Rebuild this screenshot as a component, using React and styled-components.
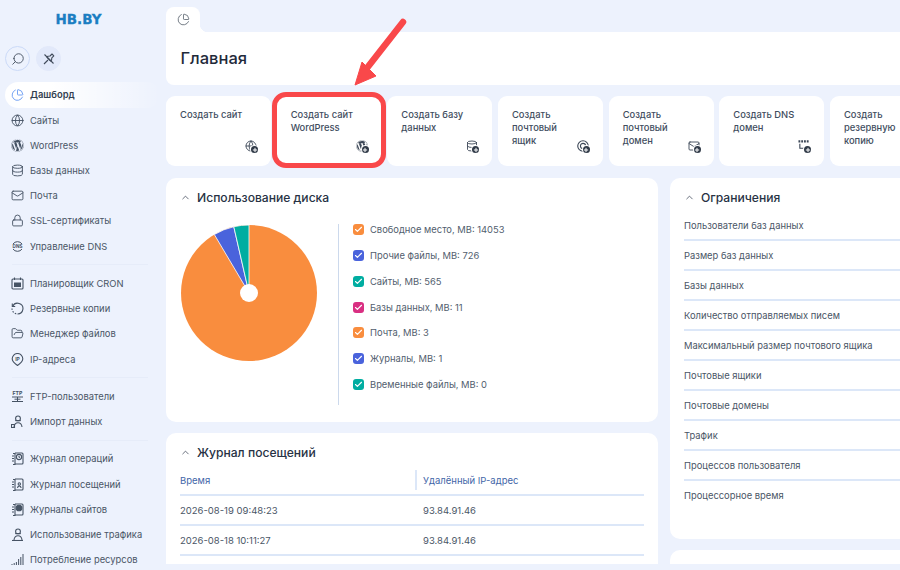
import React from 'react';
import styled, { createGlobalStyle } from 'styled-components';
import {
  ChartPie, Globe, Database, Mail, Lock, FolderOpen, Search, ChevronUp, Check, Plus,
} from 'lucide-react';
import { FaWordpress } from 'react-icons/fa';

const Global = createGlobalStyle`
  html, body { margin: 0; padding: 0; background: #edf2fd; }
  body { font-family: Inter, "Noto Sans", sans-serif; color: #4a5666; }
  #root { width: 900px; height: 570px; overflow: hidden; }
`;

const Page = styled.div`
  position: relative;
  display: flex;
  width: 900px;
  height: 570px;
  overflow: hidden;
  background: #edf2fd;
`;

const Sidebar = styled.aside`
  flex: 0 0 165px;
  box-sizing: border-box;
  padding: 0 5px;
`;

const Logo = styled.div`
  height: 38px;
  display: flex;
  align-items: center;
  justify-content: center;
  padding-right: 8px;
  font-family: "DejaVu Sans", sans-serif;
  font-weight: 700;
  font-size: 13.5px;
  -webkit-text-stroke: 0.3px #1b7ec2;
  color: #1b7ec2;
`;

const Tools = styled.div`
  display: flex;
  gap: 6px;
  margin-top: 8px;
`;

const RoundButton = styled.button`
  width: 25px;
  height: 25px;
  padding: 0;
  display: flex;
  align-items: center;
  justify-content: center;
  border-radius: 50%;
  box-sizing: border-box;
  color: #3f4a5a;
  border: 1px solid ${(p) => (p.$filled ? '#e2e9fa' : '#cbdaf8')};
  background: ${(p) => (p.$filled ? '#e2e9fa' : 'transparent')};
`;

const Nav = styled.nav`
  margin-top: 11.4px;
`;

const NavRow = styled.div`
  height: 25.2px;
  display: flex;
  align-items: center;
  gap: 6px;
  padding-left: 6px;
  border-radius: 13px;
  font-size: 9.4px;
  color: ${(p) => (p.$active ? '#333f50' : '#4a5666')};
  font-weight: ${(p) => (p.$active ? 600 : 400)};
  background: ${(p) => (p.$active ? 'linear-gradient(90deg, #ffffff 30%, rgba(255,255,255,0) 100%)' : 'none')};
`;

const NavIcon = styled.span`
  width: 13px;
  height: 13px;
  flex: none;
  display: flex;
  align-items: center;
  justify-content: center;
  color: ${(p) => (p.$active ? '#6a9cf2' : '#465364')};
`;

const Divider = styled.div`
  height: 1px;
  margin: 5.6px 12px 5.6px 7px;
  background: #e6ecf9;
`;

const Main = styled.main`
  flex: 1;
  min-width: 0;
  height: 564px;
  overflow: hidden;
  box-sizing: border-box;
  padding-top: 7px;
  margin-left: 1px;
`;

const Tab = styled.div`
  position: relative;
  width: 34px;
  height: 25px;
  display: flex;
  align-items: center;
  padding-left: 11px;
  box-sizing: border-box;
  background: #fff;
  border-radius: 8px 8px 0 0;
  color: #59626e;
  &::after {
    content: '';
    position: absolute;
    left: 34px;
    bottom: 0;
    width: 8px;
    height: 8px;
    background: radial-gradient(circle at 100% 0, transparent 8px, #fff 8.5px);
  }
`;

const Header = styled.div`
  height: 53px;
  box-sizing: border-box;
  display: flex;
  align-items: center;
  padding: 0 0 1px 14.500px;
  background: #fff;
  border-radius: 0 0 0 8px;
  font-size: 16.5px;
  font-weight: 500;
  color: #1f2a3a;
`;

const Cards = styled.div`
  display: flex;
  gap: 5.67px;
  margin-top: 11px;
  width: 800px;
`;

const Card = styled.div`
  position: relative;
  flex: 0 0 105px;
  height: 70px;
  box-sizing: border-box;
  padding: 11.500px 22px 0 14px;
  background: #fff;
  border-radius: 9px;
  font-size: 9.4px;
  font-weight: 500;
  line-height: 13px;
  color: #414d5e;
`;

const CardIcon = styled.span`
  position: absolute;
  right: 14px;
  bottom: 14px;
  width: 12px;
  height: 12px;
  display: flex;
  color: #3c4757;
`;

const PlusBadge = styled.span`
  position: absolute;
  right: -1px;
  bottom: -1px;
  width: 7px;
  height: 7px;
  display: flex;
  align-items: center;
  justify-content: center;
  border-radius: 50%;
  background: #2f3947;
  box-shadow: 0 0 0 1px #fff;
  color: #fff;
`;

const Columns = styled.div`
  display: flex;
  gap: 12px;
  margin-top: 12px;
`;

const Column = styled.div`
  display: flex;
  flex-direction: column;
  gap: 11px;
  flex: 0 0 ${(p) => p.$width}px;
`;

const Panel = styled.section`
  box-sizing: border-box;
  height: ${(p) => p.$height}px;
  padding: 0 14px;
  background: #fff;
  border-radius: 10px;
`;

const PanelTitle = styled.h2`
  height: 38px;
  margin: 0;
  display: flex;
  align-items: center;
  gap: 6px;
  font-size: 12.1px;
  font-weight: 500;
  color: #273244;
`;

const Disk = styled.div`
  display: flex;
  padding-top: 8px;
`;

const PieBox = styled.div`
  flex: 0 0 158px;
  height: 136px;
`;

const Legend = styled.ul`
  list-style: none;
  margin: 0;
  padding: 0 0 0 14px;
  height: 181px;
  border-left: 1px solid #ccd9ec;
  display: flex;
  flex-direction: column;
`;

const LegendItem = styled.li`
  height: 26px;
  display: flex;
  align-items: flex-start;
  gap: 6px;
  font-size: 9.4px;
  line-height: 11px;
  color: #525e6e;
`;

const Box = styled.span`
  width: 11px;
  height: 11px;
  border-radius: 3px;
  display: flex;
  align-items: center;
  justify-content: center;
  color: #fff;
  background: ${(p) => p.$color};
`;

const Table = styled.div`
  margin-top: -1px;
  font-size: 9.5px;
`;

const HeadRow = styled.div`
  display: grid;
  grid-template-columns: 235px 1fr;
  height: 24px;
  align-items: start;
  border-bottom: 2px solid #dce7f8;
  color: #3f66a8;
`;

const HeadCell = styled.div`
  height: 20px;
  display: flex;
  align-items: center;
  ${(p) => p.$sep && 'border-left: 2px solid #dce7f8; padding-left: 6px;'}
`;

const Row = styled.div`
  display: grid;
  grid-template-columns: 243px 1fr;
  height: 28px;
  align-items: center;
  border-bottom: 2px solid #dce7f8;
  color: #4a5666;
`;

const LimitRow = styled.div`
  height: 28px;
  display: flex;
  align-items: center;
  font-size: 9.4px;
  color: #4a5666;
  border-bottom: ${(p) => (p.$last ? 'none' : '2px solid #dce7f8')};
`;

const Limits = styled.div`
  margin-top: -5px;
  margin-right: -30px;
`;

/* red annotation over the screenshot */
const Highlight = styled.div`
  position: absolute;
  left: 272px;
  top: 92px;
  width: 114px;
  height: 76px;
  box-sizing: border-box;
  border: 5px solid #f9484a;
  border-radius: 14px;
`;

const Arrow = styled.svg`
  position: absolute;
  left: 345px;
  top: 10px;
  pointer-events: none;
`;

const sw = 1.7;

const Dns = () => (
  <svg width="13" height="13" viewBox="0 0 13 13" fill="none" stroke="currentColor" strokeWidth="1">
    <path d="M2 4a5.5 5.5 0 0 1 9 0M2 9a5.5 5.5 0 0 0 9 0" />
    <text x="6.5" y="8.2" textAnchor="middle" fontSize="4.6" fontWeight="700" fill="currentColor" stroke="none">DNS</text>
  </svg>
);

const Cron = () => (
  <svg width="13" height="13" viewBox="0 0 13 13" fill="none" stroke="currentColor" strokeWidth="1.1">
    <rect x="1" y="2" width="11" height="10" rx="1" />
    <path d="M3.5 .5v2.5M9.5 .5v2.5" />
    <rect x="3" y="5.5" width="7" height="4.5" fill="currentColor" stroke="none" />
  </svg>
);

const Backup = () => (
  <svg width="13" height="13" viewBox="0 0 13 13" fill="none" stroke="currentColor" strokeWidth="1.1">
    <path d="M1.7 4.2A5.4 5.4 0 1 1 6.5 12" />
    <path d="M1.3 1.6v2.9h2.9" />
    <path d="M1 6.5a5.5 5.5 0 0 0 5.5 5.5" strokeDasharray="1.5 1.3" />
  </svg>
);

const Ip = () => (
  <svg width="13" height="13" viewBox="0 0 13 13" fill="none" stroke="currentColor" strokeWidth="1.1">
    <path d="M6.5 12.5C3.5 10.5 1.2 8.6 1.2 5.8a5.3 5.3 0 0 1 10.6 0c0 2.8-2.3 4.7-5.3 6.7z" />
    <text x="6.5" y="7.8" textAnchor="middle" fontSize="5" fontWeight="700" fill="currentColor" stroke="none">IP</text>
  </svg>
);

const Ftp = () => (
  <svg width="13" height="13" viewBox="0 0 13 13" fill="none" stroke="currentColor" strokeWidth="1">
    <text x="6.5" y="5" textAnchor="middle" fontSize="5.2" fontWeight="700" fill="currentColor" stroke="none">FTP</text>
    <path d="M1 7h11M1 11.5h11M6.5 7v4.5M3.5 9.2h6" />
  </svg>
);

const Person = ({ extra }) => (
  <svg width="13" height="13" viewBox="0 0 13 13" fill="none" stroke="currentColor" strokeWidth="1.1">
    <circle cx="7" cy="3.4" r="2.4" />
    <path d="M4.2 5.6h5.6" />
    <path d="M3 12c.3-2.8 1.8-4.2 4-4.2s3.7 1.4 4 4.2" />
    {extra}
  </svg>
);

const Notebook = ({ children }) => (
  <svg width="13" height="13" viewBox="0 0 13 13" fill="none" stroke="currentColor" strokeWidth="1.1">
    <path d="M4 1h7a1 1 0 0 1 1 1v9a1 1 0 0 1-1 1H4" />
    <path d="M2 1.5h2v11H2M1 4h2M1 6.5h2M1 9h2" />
    {children}
  </svg>
);

const Bars = () => (
  <svg width="13" height="13" viewBox="0 0 13 13" fill="currentColor">
    <rect x="0.5" y="11" width="1" height="1" />
    <rect x="2.7" y="10" width="1" height="2" />
    <rect x="4.9" y="9" width="1" height="3" />
    <rect x="7.1" y="6" width="1" height="6" />
    <rect x="9.3" y="4" width="1" height="8" />
    <rect x="11.5" y="1" width="1" height="11" />
  </svg>
);

const MailboxIcon = () => (
  <svg width="12" height="12" viewBox="0 0 13 13" fill="none" stroke="currentColor" strokeWidth="1.2">
    <circle cx="6.5" cy="6.5" r="5.7" />
    <circle cx="6.5" cy="6.5" r="2.8" />
  </svg>
);

const DnsDomainIcon = () => (
  <svg width="12" height="12" viewBox="0 0 13 13" fill="none" stroke="currentColor" strokeWidth="1.2">
    <path d="M.5 1.5h12" strokeWidth="2.6" strokeDasharray="2 1" />
    <path d="M2 4v5h5" />
  </svg>
);

const PinCrossed = () => (
  <svg width="14" height="14" viewBox="0 0 14 14" fill="none" stroke="currentColor" strokeWidth="1.1" strokeLinejoin="round">
    <path d="M2 12l4-4" />
    <path d="M5 5.4L8.6 9l1-1 .2-2.2 2-2L10 2 8 4l-2.2.3z" />
    <path d="M2.5 2.5l9 9" />
  </svg>
);

const navGroups = [
  [
    { label: 'Дашборд', icon: <ChartPie size={14} strokeWidth={sw} />, active: true },
    { label: 'Сайты', icon: <Globe size={13} strokeWidth={sw} /> },
    { label: 'WordPress', icon: <FaWordpress size={13} /> },
    { label: 'Базы данных', icon: <Database size={13} strokeWidth={sw} /> },
    { label: 'Почта', icon: <Mail size={13} strokeWidth={sw} /> },
    { label: 'SSL-сертификаты', icon: <Lock size={13} strokeWidth={sw} /> },
    { label: 'Управление DNS', icon: <Dns /> },
  ],
  [
    { label: 'Планировщик CRON', icon: <Cron /> },
    { label: 'Резервные копии', icon: <Backup /> },
    { label: 'Менеджер файлов', icon: <FolderOpen size={13} strokeWidth={sw} /> },
    { label: 'IP-адреса', icon: <Ip /> },
  ],
  [
    { label: 'FTP-пользователи', icon: <Ftp /> },
    { label: 'Импорт данных', icon: <Person extra={<path d="M.5 9.5h3v3h-3z" />} /> },
  ],
  [
    { label: 'Журнал операций', icon: <Notebook><circle cx="8" cy="5" r="2.6" /><path d="M8 3.8V5l1 .6" /></Notebook> },
    { label: 'Журнал посещений', icon: <Notebook><path d="M6.5 10c.2-1.4.8-2 1.8-2s1.6.6 1.8 2" /><circle cx="8.3" cy="6" r="1.2" /></Notebook> },
    { label: 'Журналы сайтов', icon: <Notebook><circle cx="8" cy="5" r="2.8" fill="currentColor" /></Notebook> },
    { label: 'Использование трафика', icon: <Person extra={<path d="M1 12.5h11" />} /> },
    { label: 'Потребление ресурсов', icon: <Bars /> },
  ],
];

const cards = [
  { text: 'Создать сайт', icon: <Globe size={12} strokeWidth={1.8} /> },
  { text: 'Создать сайт WordPress', icon: <FaWordpress size={12} /> },
  { text: 'Создать базу данных', icon: <Database size={12} strokeWidth={1.8} /> },
  { text: 'Создать почтовый ящик', icon: <MailboxIcon /> },
  { text: 'Создать почтовый домен', icon: <Mail size={12} strokeWidth={1.8} /> },
  { text: 'Создать DNS домен', icon: <DnsDomainIcon /> },
  { text: 'Создать резервную копию', icon: null },
];

const legend = [
  ['Свободное место, МВ: 14053', '#f98d3e'],
  ['Прочие файлы, МВ: 726', '#4a63dc'],
  ['Сайты, МВ: 565', '#00ada1'],
  ['Базы данных, МВ: 11', '#d92f82'],
  ['Почта, МВ: 3', '#f98d3e'],
  ['Журналы, МВ: 1', '#4a63dc'],
  ['Временные файлы, МВ: 0', '#00ada1'],
];

const visits = [
  ['2026-08-19 09:48:23', '93.84.91.46'],
  ['2026-08-18 10:11:27', '93.84.91.46'],
];

const limits = [
  'Пользователи баз данных',
  'Размер баз данных',
  'Базы данных',
  'Количество отправляемых писем',
  'Максимальный размер почтового ящика',
  'Почтовые ящики',
  'Почтовые домены',
  'Трафик',
  'Процессов пользователя',
  'Процессорное время',
];

const DiskPie = () => (
  <svg width="138" height="138" viewBox="-69 -69 138 138">
    <circle r="68" fill="#f98d3e" />
    <path d="M0 0L-34.7 -58.5A68 68 0 0 1 -15.2 -66.3Z" fill="#4a63dc" stroke="#fff" strokeWidth="0.8" />
    <path d="M0 0L-15.2 -66.3A68 68 0 0 1 0 -68Z" fill="#00ada1" stroke="#fff" strokeWidth="0.8" />
    <circle r="9" fill="#fff" />
  </svg>
);

export default function App() {
  return (
    <Page>
      <Global />
      <Sidebar>
        <Logo>HB.BY</Logo>
        <Tools>
          <RoundButton><Search size={14} strokeWidth={1.5} style={{ transform: 'scaleX(-1)' }} /></RoundButton>
          <RoundButton $filled><PinCrossed /></RoundButton>
        </Tools>
        <Nav>
          {navGroups.map((group, i) => (
            <React.Fragment key={i}>
              {i > 0 && <Divider />}
              {group.map((item) => (
                <NavRow key={item.label} $active={item.active}>
                  <NavIcon $active={item.active}>{item.icon}</NavIcon>
                  {item.label}
                </NavRow>
              ))}
            </React.Fragment>
          ))}
        </Nav>
      </Sidebar>
      <Main>
        <Tab><ChartPie size={13} strokeWidth={1.5} /></Tab>
        <Header>Главная</Header>
        <Cards>
          {cards.map((card) => (
            <Card key={card.text}>
              {card.text}
              {card.icon && (
                <CardIcon>
                  {card.icon}
                  <PlusBadge><Plus size={6} strokeWidth={4} /></PlusBadge>
                </CardIcon>
              )}
            </Card>
          ))}
        </Cards>
        <Columns>
          <Column $width={492}>
            <Panel $height={244}>
              <PanelTitle><ChevronUp size={11} strokeWidth={1.5} />Использование диска</PanelTitle>
              <Disk>
                <PieBox><DiskPie /></PieBox>
                <Legend>
                  {legend.map(([text, color]) => (
                    <LegendItem key={text}>
                      <Box $color={color}><Check size={9} strokeWidth={3} /></Box>
                      {text}
                    </LegendItem>
                  ))}
                </Legend>
              </Disk>
            </Panel>
            <Panel $height={140}>
              <PanelTitle><ChevronUp size={11} strokeWidth={1.5} />Журнал посещений</PanelTitle>
              <Table>
                <HeadRow>
                  <HeadCell>Время</HeadCell>
                  <HeadCell $sep>Удалённый IP-адрес</HeadCell>
                </HeadRow>
                {visits.map(([time, ip]) => (
                  <Row key={time}><div>{time}</div><div>{ip}</div></Row>
                ))}
              </Table>
            </Panel>
          </Column>
          <Column $width={260}>
            <Panel $height={361}>
              <PanelTitle><ChevronUp size={11} strokeWidth={1.5} />Ограничения</PanelTitle>
              <Limits>
                {limits.map((text, i) => (
                  <LimitRow key={text} $last={i === limits.length - 1}>{text}</LimitRow>
                ))}
              </Limits>
            </Panel>
            <Panel $height={60} />
          </Column>
        </Columns>
      </Main>
      <Highlight />
      <Arrow width="70" height="85" viewBox="0 0 70 85">
        <path d="M58 12L22 58" stroke="#f9484a" strokeWidth="6.5" strokeLinecap="round" fill="none" />
        <path d="M10 75L17 52L31 66Z" fill="#f9484a" stroke="#f9484a" strokeLinejoin="round" />
      </Arrow>
    </Page>
  );
}
